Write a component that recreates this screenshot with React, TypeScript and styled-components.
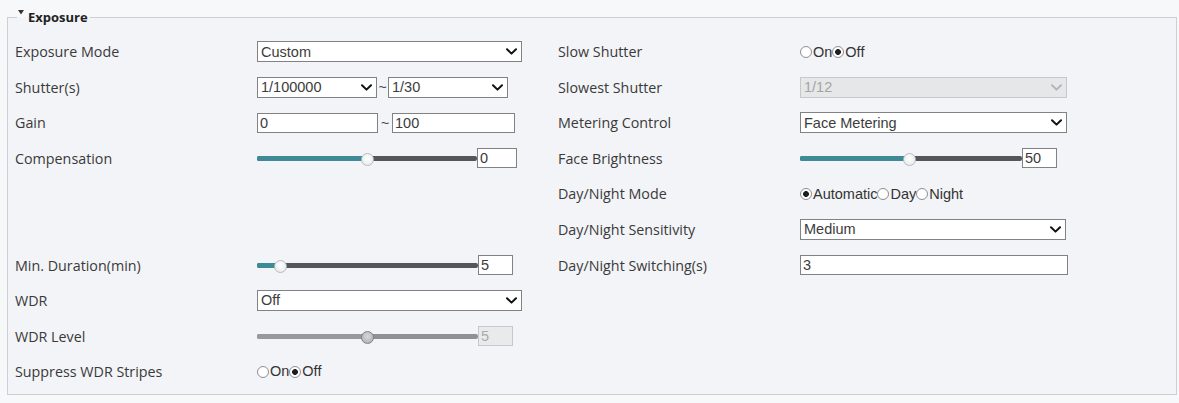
import React from "react";
import styled, { createGlobalStyle } from "styled-components";

const GlobalStyle = createGlobalStyle`
  html, body { margin: 0; padding: 0; background: #f7f8f9; }
  body { font-family: "Open Sans", "Liberation Sans", sans-serif; color: #333; }
  *, *::before, *::after { box-sizing: border-box; }
`;

const Page = styled.div`
  width: 1179px;
  height: 403px;
  padding: 9px 2px 0 7px;
`;

const Panel = styled.fieldset`
  margin: 0;
  min-width: 0;
  padding: 9px 0 5px 7px;
  border: 1px solid #cdcfd2;
  background: #f2f4f7;
`;

const Legend = styled.legend`
  margin-left: 2px;
  padding: 0 2px 0 1px;
  font: 700 13px/16px "Open Sans", sans-serif;
  color: #222;
  display: flex;
  align-items: flex-start;
`;

const Caret = styled.svg`
  width: 6px;
  height: 5px;
  margin: 1px 4px 0 0;
  flex: none;
`;

const Columns = styled.div`
  display: grid;
  grid-template-columns: 543px 1fr;
`;

const Column = styled.div`
  display: flex;
  flex-direction: column;
`;

const Row = styled.div`
  height: 35.56px;
  display: grid;
  grid-template-columns: 242px auto;
  align-items: center;
`;

const Label = styled.div`
  font-size: 14.3px;
  color: #3a3a3a;
  white-space: nowrap;
`;

const Control = styled.div`
  display: flex;
  align-items: center;
`;

const SelectBox = styled.div<{ $w: number; $disabled?: boolean }>`
  width: ${(p) => p.$w}px;
  height: 21px;
  display: flex;
  align-items: center;
  justify-content: space-between;
  padding: 0 4px 0 3px;
  border: 1px solid ${(p) => (p.$disabled ? "#c6c8ca" : "#808285")};
  background: ${(p) => (p.$disabled ? "#e6e7e8" : "#fff")};
  color: ${(p) => (p.$disabled ? "#a2a4a6" : "#3c3c3c")};
  font: 14.5px/1 "Liberation Sans", Arial, sans-serif;
`;

const Chevron = styled.svg<{ $disabled?: boolean }>`
  width: 11px;
  height: 7px;
  flex: none;
  stroke: ${(p) => (p.$disabled ? "#b4b6b9" : "#111")};
`;

const TextInput = styled.input<{ $w: number }>`
  width: ${(p) => p.$w}px;
  height: 20px;
  margin: 0;
  padding: 0 2px;
  border: 1px solid #808285;
  background: #fff;
  color: #3c3c3c;
  font: 14.5px/1 "Liberation Sans", Arial, sans-serif;
  outline: none;
  &:disabled {
    border-color: #c6c8ca;
    background: #e9eaeb;
    color: #a9abad;
  }
`;

const Tilde = styled.span<{ $w: number }>`
  width: ${(p) => p.$w}px;
  text-align: center;
  font: 14px/1 "Liberation Sans", Arial, sans-serif;
  color: #444;
`;

const Track = styled.div<{ $w: number; $disabled?: boolean }>`
  position: relative;
  width: ${(p) => p.$w}px;
  height: 5px;
  border-radius: 2px;
  background: ${(p) => (p.$disabled ? "#8e9296" : "#53575c")};
`;

const Fill = styled.div<{ $disabled?: boolean }>`
  height: 100%;
  border-radius: 2px 0 0 2px;
  background: ${(p) => (p.$disabled ? "#969a9e" : "#3f8a97")};
`;

const Thumb = styled.span<{ $disabled?: boolean }>`
  position: absolute;
  top: 50%;
  width: 13px;
  height: 13px;
  margin: -5.5px 0 0 -6.5px;
  border-radius: 50%;
  border: 1px solid ${(p) => (p.$disabled ? "#7e8286" : "#b9bbbe")};
  background: ${(p) =>
    p.$disabled
      ? "radial-gradient(circle at 50% 40%, #d6d8da, #a9acaf)"
      : "radial-gradient(circle at 50% 40%, #ffffff, #e3e5e7)"};
`;

const RadioSet = styled.div`
  display: flex;
  align-items: center;
  font: 14.5px/1 "Liberation Sans", Arial, sans-serif;
  color: #333;
`;

const RadioDot = styled.span<{ $on: boolean }>`
  width: 12px;
  height: 12px;
  border-radius: 50%;
  border: 1px solid #8d8f92;
  background: ${(p) =>
    p.$on ? "radial-gradient(circle, #1e1e1e 0 2.6px, #fff 3.2px)" : "#fff"};
  flex: none;
`;

const RadioText = styled.span`
  margin: 0 0 0 1px;
`;

function Select({ w, value, disabled }: { w: number; value: string; disabled?: boolean }) {
  return (
    <SelectBox $w={w} $disabled={disabled}>
      <span>{value}</span>
      <Chevron $disabled={disabled} viewBox="0 0 11 7" fill="none" strokeWidth={2}>
        <path d="M1 1.2 L5.5 5.6 L10 1.2" strokeLinecap="round" strokeLinejoin="round" />
      </Chevron>
    </SelectBox>
  );
}

function Slider({
  w,
  pct,
  value,
  box,
  disabled,
}: {
  w: number;
  pct: number;
  value: string;
  box: number;
  disabled?: boolean;
}) {
  return (
    <Control>
      <Track $w={w} $disabled={disabled}>
        <Fill $disabled={disabled} style={{ width: `${pct}%` }} />
        <Thumb $disabled={disabled} style={{ left: `${pct}%` }} />
      </Track>
      <TextInput $w={box} value={value} disabled={disabled} readOnly />
    </Control>
  );
}

function Radios({ options, checked }: { options: string[]; checked: number }) {
  return (
    <RadioSet>
      {options.map((o, i) => (
        <React.Fragment key={o}>
          <RadioDot $on={i === checked} />
          <RadioText>{o}</RadioText>
        </React.Fragment>
      ))}
    </RadioSet>
  );
}

type Field = { label: string; control: React.ReactNode } | null;

const left: Field[] = [
  { label: "Exposure Mode", control: <Select w={265} value="Custom" /> },
  {
    label: "Shutter(s)",
    control: (
      <Control>
        <Select w={120} value="1/100000" />
        <Tilde $w={11}>~</Tilde>
        <Select w={120} value="1/30" />
      </Control>
    ),
  },
  {
    label: "Gain",
    control: (
      <Control>
        <TextInput $w={121} value="0" readOnly />
        <Tilde $w={14}>~</Tilde>
        <TextInput $w={123} value="100" readOnly />
      </Control>
    ),
  },
  { label: "Compensation", control: <Slider w={220} pct={50} value="0" box={40} /> },
  null,
  null,
  { label: "Min. Duration(min)", control: <Slider w={221} pct={10.5} value="5" box={35} /> },
  { label: "WDR", control: <Select w={265} value="Off" /> },
  { label: "WDR Level", control: <Slider w={221} pct={50} value="5" box={35} disabled /> },
  { label: "Suppress WDR Stripes", control: <Radios options={["On", "Off"]} checked={1} /> },
];

const right: Field[] = [
  { label: "Slow Shutter", control: <Radios options={["On", "Off"]} checked={1} /> },
  { label: "Slowest Shutter", control: <Select w={267} value="1/12" disabled /> },
  { label: "Metering Control", control: <Select w={267} value="Face Metering" /> },
  { label: "Face Brightness", control: <Slider w={222} pct={49.5} value="50" box={35} /> },
  {
    label: "Day/Night Mode",
    control: <Radios options={["Automatic", "Day", "Night"]} checked={0} />,
  },
  { label: "Day/Night Sensitivity", control: <Select w={266} value="Medium" /> },
  { label: "Day/Night Switching(s)", control: <TextInput $w={268} value="3" readOnly /> },
];

function FieldColumn({ fields }: { fields: Field[] }) {
  return (
    <Column>
      {fields.map((f, i) => (
        <Row key={i}>
          {f && (
            <>
              <Label>{f.label}</Label>
              {f.control}
            </>
          )}
        </Row>
      ))}
    </Column>
  );
}

export default function App() {
  return (
    <>
      <GlobalStyle />
      <Page>
        <Panel>
          <Legend>
            <Caret viewBox="0 0 6 5">
              <path d="M0 0 H6 L3 4.5 Z" fill="#333" />
            </Caret>
            Exposure
          </Legend>
          <Columns>
            <FieldColumn fields={left} />
            <FieldColumn fields={right} />
          </Columns>
        </Panel>
      </Page>
    </>
  );
}
